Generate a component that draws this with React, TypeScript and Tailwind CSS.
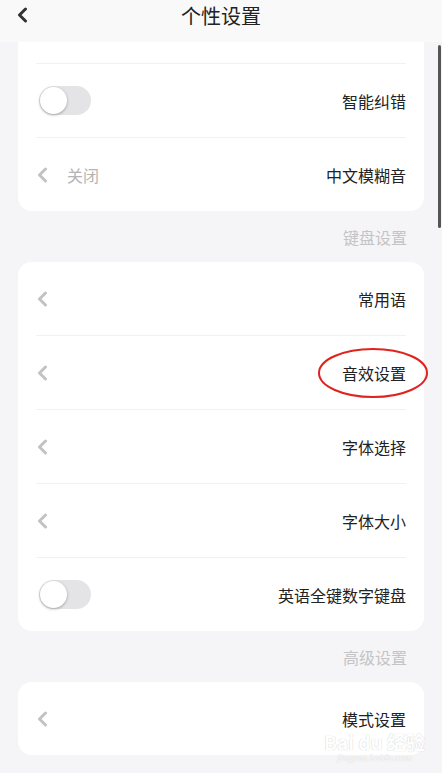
import { ReactNode } from "react"

const font = { fontFamily: '"Noto Sans CJK SC", "Noto Sans", sans-serif' }

function Chevron({ className = "" }: { className?: string }) {
  return (
    <svg width="12" height="16" viewBox="0 0 12 16" className={className}>
      <path d="M9.5 2 L3.5 8 L9.5 14" fill="none" stroke="currentColor" strokeWidth="3" strokeLinecap="round" strokeLinejoin="round" />
    </svg>
  )
}

function Toggle() {
  return (
    <div className="ml-[3px] w-[52px] h-[29px] rounded-full bg-[#e4e4e7] p-[1px] flex items-center">
      <div className="w-[27px] h-[27px] rounded-full bg-white shadow-[0_1px_3px_rgba(0,0,0,0.3)]" />
    </div>
  )
}

function Divider() {
  return <div className="h-px bg-[#f1f1f3]" />
}

function Row({ left, label }: { left?: ReactNode; label: ReactNode }) {
  return (
    <div className="h-[73px] flex items-center justify-between">
      <div className="flex items-center">{left ?? <Chevron className="text-[#c2c2c2]" />}</div>
      <div className="text-base text-[#222]">{label}</div>
    </div>
  )
}

function Section({ title }: { title: string }) {
  return <div className="h-[51px] flex items-center justify-end pr-[17px] text-base text-[#c4c4c6]">{title}</div>
}

export default function App() {
  return (
    <div style={font} className="relative w-[442px] h-[773px] overflow-hidden bg-[#f5f5f7] flex flex-col">
      <div className="h-[42px] bg-[#f9f9f9] flex items-center justify-center relative shrink-0">
        <Chevron className="absolute left-[16px] top-[7px] text-[#333]" />
        <span className="text-[20px] text-[#222] -mt-[10px]">个性设置</span>
      </div>

      <div className="px-[18px] flex flex-col">
        <div className="bg-white rounded-b-[14px] px-[18px]">
          <div className="h-[21px]" />
          <Divider />
          <Row left={<Toggle />} label="智能纠错" />
          <Divider />
          <Row
            left={
              <>
                <Chevron className="text-[#c2c2c2]" />
                <span className="ml-[19px] text-base text-[#b4b4b4]">关闭</span>
              </>
            }
            label="中文模糊音"
          />
        </div>

        <Section title="键盘设置" />

        <div className="bg-white rounded-[14px] px-[18px]">
          <Row label="常用语" />
          <Divider />
          <Row label="音效设置" />
          <Divider />
          <Row label="字体选择" />
          <Divider />
          <Row label="字体大小" />
          <Divider />
          <Row left={<Toggle />} label="英语全键数字键盘" />
        </div>

        <Section title="高级设置" />

        <div className="bg-white rounded-[14px] px-[18px]">
          <Row label="模式设置" />
        </div>
      </div>

      {/* scrollbar */}
      <div className="absolute left-[438px] top-[45px] w-[3px] h-[183px] rounded-full bg-[#555]" />

      {/* red annotation ring */}
      <svg className="absolute left-[316px] top-[346px]" width="114" height="54" viewBox="0 0 114 54">
        <ellipse cx="57" cy="27" rx="54" ry="24" fill="none" stroke="#e0231f" strokeWidth="2" />
      </svg>

      {/* watermark */}
      <div className="absolute left-[324px] top-[732px] flex flex-col items-center whitespace-nowrap text-white [text-shadow:0_0_1px_#bdbdbd] leading-none">
        <span className="text-[19px] font-bold">Bai du 经验</span>
        <span className="text-[10px] mt-[2px] italic" style={{ fontFamily: '"Liberation Serif", serif' }}>jingyan.baidu.com</span>
      </div>
    </div>
  )
}
